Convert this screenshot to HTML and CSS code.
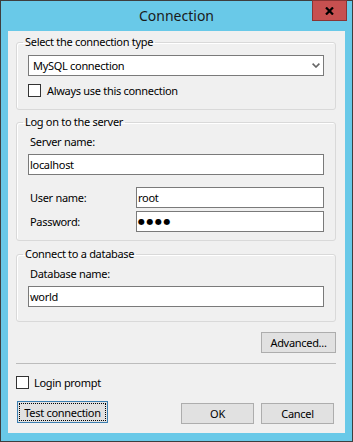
FILE: index.html
```html
<!DOCTYPE html>
<html lang="en">
<head>
  <meta charset="UTF-8" />
  <title>Connection</title>
  <link rel="stylesheet" href="styles.css">
</head>
<body>
  <div class="window">
    <div class="titlebar">
      <span class="title">Connection</span>
      <button class="close-btn">
        <svg width="9" height="8" viewBox="0 0 9 8"><path d="M1 0.5 L8 7.5 M8 0.5 L1 7.5" stroke="#000" stroke-width="2.2" fill="none"/></svg>
      </button>
    </div>

    <div class="client">
      <fieldset class="group group-type">
        <legend>Select the connection type</legend>
        <div class="select">
          <span>MySQL connection</span>
          <svg width="8" height="5" viewBox="0 0 8 5"><path d="M0.6 0.6 L4 4 L7.4 0.6" stroke="#666" stroke-width="1.6" fill="none"/></svg>
        </div>
        <div class="check"><span class="box"></span>Always use this connection</div>
      </fieldset>

      <fieldset class="group group-server">
        <legend>Log on to the server</legend>
        <div class="field-label">Server name:</div>
        <div class="textbox">localhost</div>
        <div class="field-row row-user">
          <span class="field-label">User name:</span>
          <div class="textbox">root</div>
        </div>
        <div class="field-row row-pass">
          <span class="field-label">Password:</span>
          <div class="textbox"><span class="dots">●●●●</span></div>
        </div>
      </fieldset>

      <fieldset class="group group-db">
        <legend>Connect to a database</legend>
        <div class="field-label">Database name:</div>
        <div class="textbox">world</div>
      </fieldset>

      <button class="btn btn-advanced">Advanced...</button>
      <div class="separator"></div>

      <div class="check check-login"><span class="box"></span>Login prompt</div>

      <div class="button-row">
        <button class="btn btn-test">Test connection</button>
        <button class="btn btn-ok">OK</button>
        <button class="btn btn-cancel">Cancel</button>
      </div>
    </div>
  </div>
</body>
</html>
```

FILE: styles.css
```css
* { box-sizing: border-box; }
body {
  margin: 0;
  font-family: "Noto Sans", sans-serif;
  font-size: 11px;
  letter-spacing: -0.3px;
  color: #000;
}

.window {
  width: 353px; height: 442px;
  border: 1px solid #3e3e3e;
  background: #69c9e8;
  padding: 0 7px 8px 7px;
  display: flex; flex-direction: column;
}

.titlebar {
  height: 30px; flex: none;
  display: grid;
  grid-template-columns: 1fr auto 1fr;
  align-items: start;
}
.title {
  grid-column: 2;
  font-size: 14px; line-height: 30px;
  letter-spacing: 0;
  color: #1a1a1a;
}
.close-btn {
  grid-column: 3; justify-self: end;
  width: 35px; height: 21px;
  margin: -1px -2px 0 0;
  padding: 0;
  background: #c75050;
  border: 1px solid #8a3434;
  display: flex; align-items: center; justify-content: center;
}

.client {
  flex: 1;
  background: #f0f0f0;
  padding: 3px 9px 0 8px;
  display: flex; flex-direction: column;
}

.group {
  margin: 0;
  padding: 0 11px;
  min-width: 0;
  border: 1px solid #d9d9d9;
  border-radius: 3px;
  box-shadow: inset 1px 1px 0 #fff;
}
.group legend {
  margin-left: -5px;
  padding: 0 2px;
  line-height: 16px;
}
.group-type { padding-bottom: 12px; }
.group-server { margin-top: 4px; padding-bottom: 8px; }
.group-db { margin-top: 5px; padding-bottom: 14px; }

.select {
  margin-top: 5px;
  height: 21px;
  background: #fff;
  border: 1px solid #7a7a7a;
  padding: 0 3px 0 4px;
  display: flex; align-items: center; justify-content: space-between;
}

.check {
  margin-top: 8px;
  height: 13px;
  display: flex; align-items: center; gap: 6px;
  line-height: 13px;
}
.box {
  width: 13px; height: 13px; flex: none;
  background: #fff;
  border: 1px solid #333;
}

.field-label {
  padding-left: 2px;
  line-height: 16px;
}
.group > .field-label { margin-top: 4px; }

.textbox {
  margin-top: 4px;
  height: 21px;
  background: #fff;
  border: 1px solid #7a7a7a;
  padding: 0 1px;
  line-height: 19px;
}

.field-row {
  display: grid;
  grid-template-columns: 108px 1fr;
  align-items: center;
}
.field-row .textbox { margin-top: 0; }
.row-user { margin-top: 12px; }
.row-pass { margin-top: 3px; }
.dots {
  font-family: "DejaVu Sans", sans-serif;
  font-size: 8px;
  letter-spacing: 1.5px;
  vertical-align: top;
}

.btn {
  font-family: inherit; font-size: 11px; color: #000;
  letter-spacing: inherit;
  background: #e1e1e1;
  border: 1px solid #adadad;
  padding: 0;
  height: 21px; width: 73px;
}
.btn-advanced {
  align-self: flex-end;
  width: 75px;
  margin-top: 10px;
}
.separator {
  margin-top: 10px;
  height: 1px;
  background: #bcbcbc;
}
.check-login { margin-top: 12px; gap: 5px; }

.button-row {
  margin-top: 12px;
  display: flex; align-items: flex-start; gap: 7px;
}
.btn-test {
  width: 91px; height: 22px;
  margin-left: 1px;
  border-color: #3c7fb1;
  outline: 1px dotted #000;
  outline-offset: -3px;
}
.btn-ok { margin-left: auto; margin-top: 2px; }
.btn-cancel { margin-top: 2px; margin-right: 2px; }
```
